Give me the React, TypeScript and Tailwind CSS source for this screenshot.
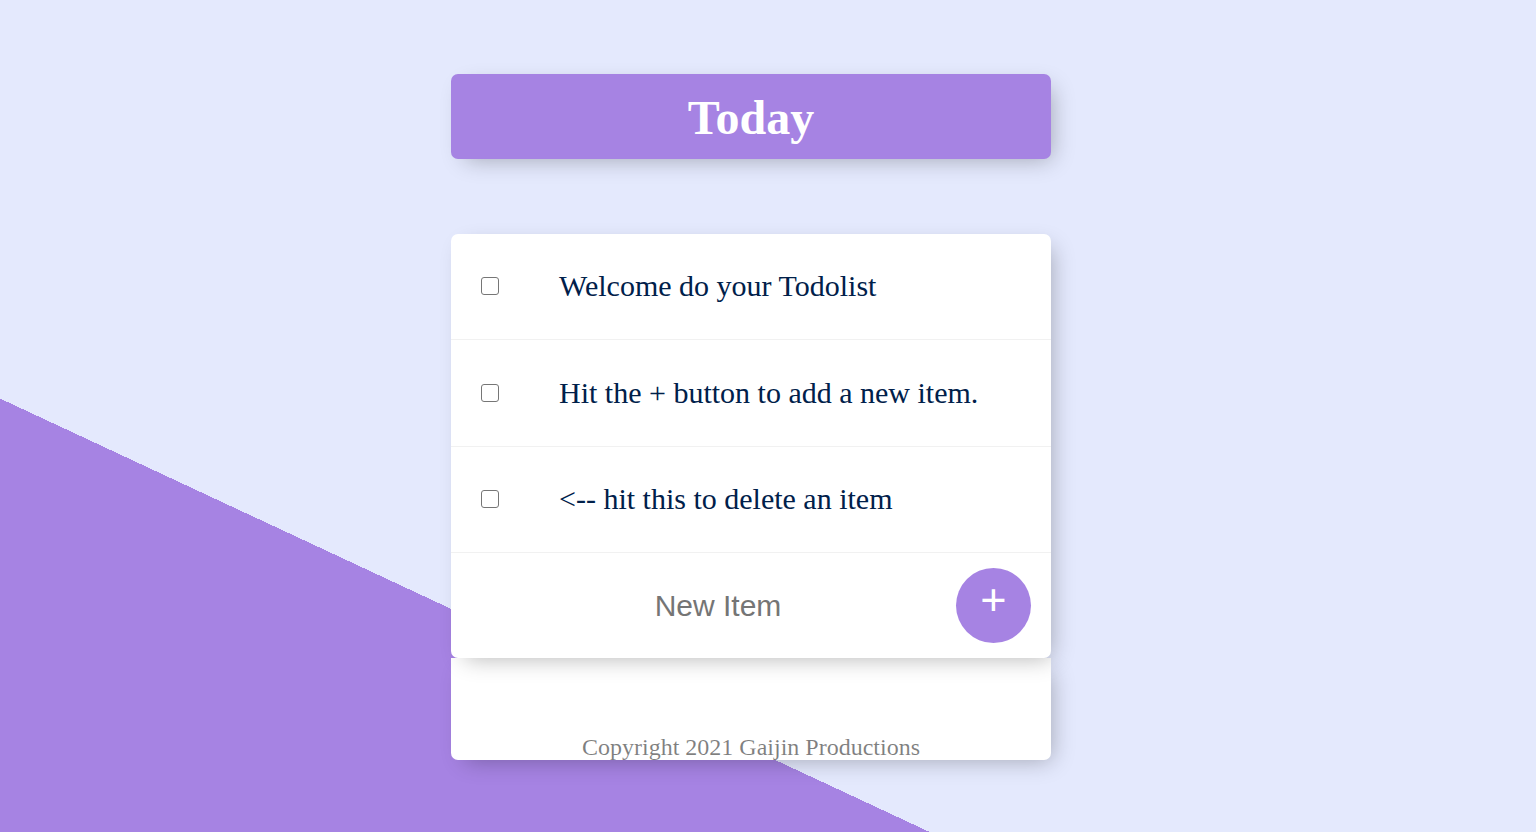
const items = [
  "Welcome do your Todolist",
  "Hit the + button to add a new item.",
  "<-- hit this to delete an item",
];

export default function App() {
  return (
    <div className="h-[832px] w-full overflow-hidden bg-[linear-gradient(25deg,#A683E3_28%,#E4E9FD_28%)] font-['Liberation_Sans',Arial,sans-serif]">
      <div className="flex flex-col items-center pr-[34px]">
        <div className="mt-[74px] w-[600px] rounded-[7px] bg-[#A683E3] pt-[17px] pb-[13px] text-center shadow-[7px_7px_22px_-7px_rgba(0,0,0,0.3)]">
          <h1 className="font-['Liberation_Serif','Times_New_Roman',serif] text-[48px] leading-[54.5px] font-bold text-white">
            Today
          </h1>
        </div>

        <div className="mt-[75px] w-[600px]">
          <div className="relative z-10 rounded-[7px] bg-white shadow-[7px_7px_22px_-7px_rgba(0,0,0,0.3)]">
            {items.map((text) => (
              <div
                key={text}
                className="flex h-[106.5px] items-center border-b border-[#F1F1F1]"
              >
                <input
                  type="checkbox"
                  className="m-[30px] h-[18px] w-[18px] shrink-0 appearance-none rounded-[3px] border-[1.5px] border-[#767676] bg-white"
                />
                <p className="px-[30px] font-['Liberation_Serif','Times_New_Roman',serif] text-[30px] leading-[34px] text-[#00204A]">
                  {text}
                </p>
              </div>
            ))}
            <form className="ml-[32px] flex h-[105px] items-center">
              <input
                type="text"
                placeholder="New Item"
                className="h-[90px] w-[470px] bg-transparent text-center text-[30px] text-[#00204A] outline-none placeholder:text-[#757575]"
              />
              <button
                type="button"
                className="ml-[3px] flex h-[75px] w-[75px] items-center justify-center rounded-full bg-[#A683E3] pb-[12px] text-[45px] leading-none text-white"
              >
                +
              </button>
            </form>
          </div>
          <footer className="flex h-[102px] items-end justify-center rounded-b-[7px] bg-white shadow-[7px_7px_22px_-7px_rgba(0,0,0,0.3)]">
            <p className="font-['Liberation_Serif','Times_New_Roman',serif] text-[24px] leading-[26px] text-black/50">
              Copyright 2021 Gaijin Productions
            </p>
          </footer>
        </div>
      </div>
    </div>
  );
}
